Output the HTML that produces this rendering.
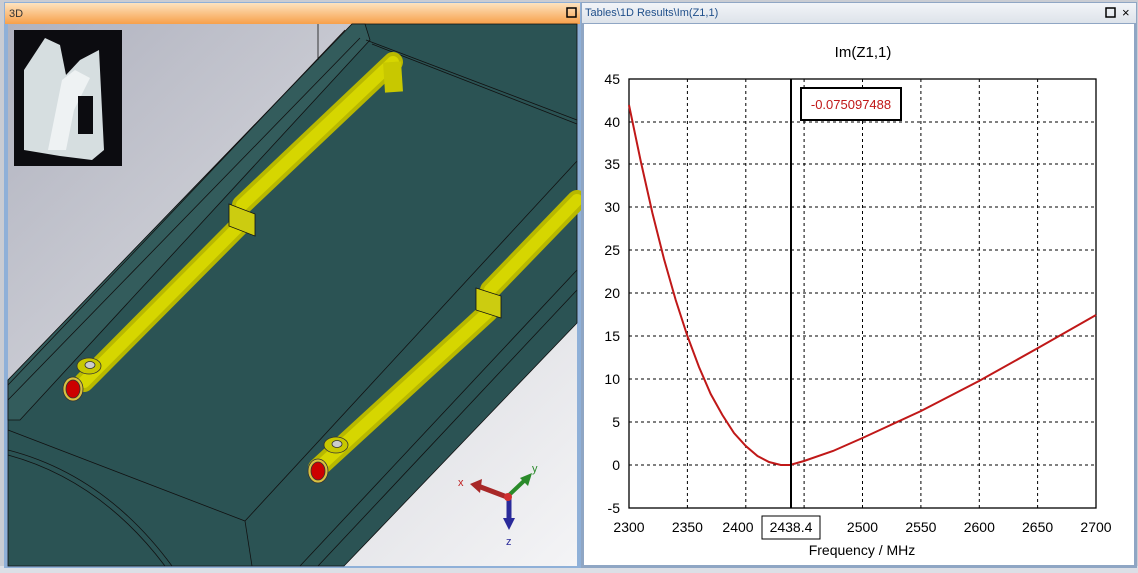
<!DOCTYPE html>
<html><head><meta charset="utf-8"><style>
html,body{margin:0;padding:0;width:1138px;height:573px;overflow:hidden;background:#d4d0c8;font-family:"Liberation Sans",sans-serif}
svg{position:absolute;left:0;top:0}
</style></head><body>
<svg width="1138" height="573" viewBox="0 0 1138 573" font-family="Liberation Sans, sans-serif">
<defs>
<linearGradient id="bg" x1="0" y1="0" x2="1" y2="1"><stop offset="0" stop-color="#b0b2bf"/><stop offset="0.55" stop-color="#d8d9de"/><stop offset="1" stop-color="#f4f4f6"/></linearGradient>
<linearGradient id="or" x1="0" y1="0" x2="0" y2="1"><stop offset="0" stop-color="#fde3c0"/><stop offset="1" stop-color="#f7a04a"/></linearGradient>
<linearGradient id="gt" x1="0" y1="0" x2="0" y2="1"><stop offset="0" stop-color="#f2f4f8"/><stop offset="1" stop-color="#dde3ea"/></linearGradient>
<linearGradient id="yp" x1="0" y1="0" x2="1" y2="1"><stop offset="0" stop-color="#eaea3a"/><stop offset="1" stop-color="#a8a800"/></linearGradient>
</defs>
<rect x="0" y="0" width="1138" height="573" fill="#c9ccd3"/>
<rect x="0" y="566" width="1138" height="7" fill="#dcdfe6"/>
<!-- left panel -->
<rect x="4" y="2" width="577" height="566" fill="#8fb0d8"/>
<rect x="5" y="3" width="575" height="21" fill="url(#or)"/>
<text x="9" y="17" font-size="11" fill="#333">3D</text>
<rect x="567" y="8" width="9" height="9" fill="none" stroke="#000" stroke-width="1.5"/>
<rect x="8" y="24" width="569" height="542" fill="url(#bg)"/>
<g stroke="#111" stroke-width="0.8">
<!-- board -->
<polygon points="352,24 577,24 577,323 344,566 8,566 8,380" fill="#2b5354"/>
<polygon points="352,24 365,24 370,40 20,420 8,420 8,380" fill="#335c5c"/>
<line x1="318" y1="24" x2="318" y2="60" stroke="#111"/>
<line x1="366" y1="40" x2="577" y2="120"/>
<line x1="372" y1="44" x2="577" y2="124"/>
<line x1="8" y1="430" x2="245" y2="521"/>
<line x1="245" y1="521" x2="577" y2="161"/>
<line x1="245" y1="521" x2="252" y2="566"/>
<line x1="8" y1="385" x2="345" y2="30"/>
<line x1="8" y1="400" x2="360" y2="38"/>
<line x1="300" y1="566" x2="577" y2="270"/>
<line x1="318" y1="566" x2="577" y2="290"/>
<path d="M8,455 Q100,480 165,566" fill="none"/>
<path d="M8,450 Q105,475 172,566" fill="none"/>
</g>
<!-- pipes -->
<g stroke-linecap="round" fill="none">
<polyline points="84,382 240,225" stroke="#b8b800" stroke-width="20"/>
<polyline points="84,382 240,225" stroke="#d6d600" stroke-width="12"/>
<polyline points="242,205 393,62" stroke="#b8b800" stroke-width="20"/>
<polyline points="242,205 393,62" stroke="#d6d600" stroke-width="12"/>
<line x1="392" y1="62" x2="394" y2="92" stroke="#c8c800" stroke-width="18" stroke-linecap="butt"/>
<polyline points="318,468 488,312" stroke="#b8b800" stroke-width="20"/>
<polyline points="318,468 488,312" stroke="#d6d600" stroke-width="12"/>
<polyline points="490,290 577,200" stroke="#b8b800" stroke-width="20"/>
<polyline points="490,290 577,200" stroke="#d6d600" stroke-width="12"/>
</g>
<polygon points="229,204 255,214 255,236 229,226" fill="#cccc10" stroke="#111" stroke-width="0.8"/>
<polygon points="476,288 501,296 501,318 476,310" fill="#cccc10" stroke="#111" stroke-width="0.8"/>
<g stroke="#333" stroke-width="0.8">
<ellipse cx="89" cy="366" rx="12" ry="8" fill="#c8c800"/><ellipse cx="90" cy="365" rx="5" ry="3.5" fill="#ccc"/>
<ellipse cx="73" cy="389" rx="10" ry="12" fill="#d8c040"/><ellipse cx="73" cy="389" rx="7" ry="9" fill="#c00"/>
<ellipse cx="336" cy="445" rx="12" ry="8" fill="#c8c800"/><ellipse cx="337" cy="444" rx="5" ry="3.5" fill="#ccc"/>
<ellipse cx="318" cy="471" rx="10" ry="12" fill="#d8c040"/><ellipse cx="318" cy="471" rx="7" ry="9" fill="#c00"/>
</g>
<!-- inset -->
<rect x="14" y="30" width="108" height="136" fill="#0c0c10"/>
<path d="M24,70 L45,38 L60,45 L66,75 L80,60 L99,50 L104,150 L92,160 L60,156 L24,150 Z" fill="#d6dee0"/>
<path d="M48,150 L56,110 L62,80 L75,70 L90,78 L74,110 L66,150 Z" fill="#eef2f3"/>
<rect x="78" y="96" width="15" height="38" fill="#0c0c10"/>
<!-- axes -->
<line x1="507" y1="497" x2="478" y2="486" stroke="#a82828" stroke-width="5"/>
<polygon points="470,484 482,479 480,493" fill="#a82828"/>
<line x1="507" y1="497" x2="526" y2="479" stroke="#2a8a2a" stroke-width="4"/>
<polygon points="532,473 520,478 528,486" fill="#2a8a2a"/>
<line x1="509" y1="497" x2="509" y2="522" stroke="#2a2a9a" stroke-width="5"/>
<polygon points="503,518 515,518 509,530" fill="#2a2a9a"/>
<circle cx="508" cy="497" r="4" fill="#d03030"/>
<text x="458" y="486" font-size="11" fill="#c02020">x</text>
<text x="532" y="472" font-size="11" fill="#2a8a2a">y</text>
<text x="506" y="545" font-size="11" fill="#2a2a9a">z</text>
<!-- right panel -->
<rect x="581" y="2" width="556" height="566" fill="#8fa6c4"/>
<rect x="582" y="3" width="554" height="20" fill="url(#gt)"/>
<text x="585" y="16" font-size="11" fill="#1f4f8a">Tables\1D Results\Im(Z1,1)</text>
<rect x="1106" y="8" width="9" height="9" fill="none" stroke="#000" stroke-width="1.5"/>
<text x="1122" y="17" font-size="13" fill="#000">×</text>
<rect x="584" y="24" width="550" height="541" fill="#fff"/>
<text x="863" y="57" font-size="15" text-anchor="middle" fill="#000">Im(Z1,1)</text>
<g stroke="#000" stroke-width="1" stroke-dasharray="3,3">
<line x1="687.4" y1="79" x2="687.4" y2="508"/><line x1="745.8" y1="79" x2="745.8" y2="508"/><line x1="804.1" y1="79" x2="804.1" y2="508"/><line x1="862.5" y1="79" x2="862.5" y2="508"/><line x1="920.9" y1="79" x2="920.9" y2="508"/><line x1="979.3" y1="79" x2="979.3" y2="508"/><line x1="1037.6" y1="79" x2="1037.6" y2="508"/>
<line x1="629" y1="122" x2="1096" y2="122"/><line x1="629" y1="164" x2="1096" y2="164"/><line x1="629" y1="207" x2="1096" y2="207"/><line x1="629" y1="250" x2="1096" y2="250"/><line x1="629" y1="293" x2="1096" y2="293"/><line x1="629" y1="336" x2="1096" y2="336"/><line x1="629" y1="379" x2="1096" y2="379"/><line x1="629" y1="422" x2="1096" y2="422"/><line x1="629" y1="465" x2="1096" y2="465"/>
</g>
<rect x="629" y="79" width="467" height="429" fill="none" stroke="#000" stroke-width="1.3"/>
<polyline fill="none" stroke="#c01818" stroke-width="2" points="629,105 640.7,161 652.4,213 664,259 675.7,300 687.4,336 699,367 710.7,394 722.4,415 734,433 745.8,446 757.5,456 769,462 780.8,465 790,465 804,461 833,451 862.5,438 921,411 979,381 1038,348 1096,315"/>
<line x1="791" y1="79" x2="791" y2="508" stroke="#000" stroke-width="2"/>
<rect x="801" y="88" width="100" height="32" fill="#fff" stroke="#000" stroke-width="2"/>
<text x="851" y="109" font-size="13" text-anchor="middle" fill="#c01818">-0.075097488</text>
<g font-size="14" fill="#000" text-anchor="end">
<text x="620" y="84">45</text><text x="620" y="127">40</text><text x="620" y="169">35</text><text x="620" y="212">30</text><text x="620" y="255">25</text><text x="620" y="298">20</text><text x="620" y="341">15</text><text x="620" y="384">10</text><text x="620" y="427">5</text><text x="620" y="470">0</text><text x="620" y="513">-5</text>
</g>
<g font-size="14" fill="#000" text-anchor="middle">
<text x="629" y="532">2300</text><text x="687.4" y="532">2350</text><text x="738" y="532">2400</text><text x="862.5" y="532">2500</text><text x="920.9" y="532">2550</text><text x="979.3" y="532">2600</text><text x="1037.6" y="532">2650</text><text x="1096" y="532">2700</text>
<text x="862" y="555">Frequency / MHz</text>
</g>
<rect x="762" y="516" width="58" height="23" fill="#fff" stroke="#000" stroke-width="1"/>
<text x="791" y="532" font-size="14" text-anchor="middle">2438.4</text>
</svg>
</body></html>
